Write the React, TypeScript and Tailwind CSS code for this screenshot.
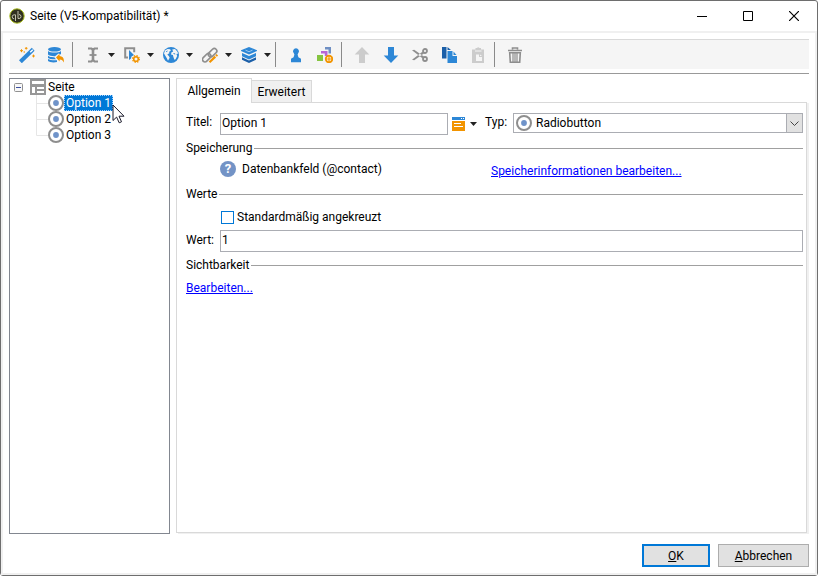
import React, { useState } from "react";

type IconProps = { children: React.ReactNode };

const Icon16: React.FC<IconProps> = ({ children }) => (
  <svg width="16" height="16" viewBox="0 0 16 16" fill="none" className="block shrink-0" aria-hidden="true">
    {children}
  </svg>
);

const BLUE = "#2d87d6";
const DARK_BLUE = "#1b5fa8";
const ORANGE = "#f29400";
const GRAY = "#8e8e8e";
const LIGHT = "#cccccc";

const WandIcon = () => (
  <Icon16>
    <path d="M1.400 14.800 14.200 2.300" stroke={BLUE} strokeWidth="4" />
    <path d="M11.200 5.200 13.800 2.700" stroke="#fff" strokeWidth="1.400" />
    <path d="M2.500 2.200v3M1 3.700h3M7.200 0v2.600M5.900 1.300h2.600M14.500 7.600v2.800M13.100 9h2.800M5.200 4.200v1.600" stroke={ORANGE} strokeWidth="1" />
  </Icon16>
);

const DatabaseIcon = () => (
  <Icon16>
    <ellipse cx="6.500" cy="2.300" rx="6.500" ry="2.300" fill={BLUE} />
    <path d="M0 4c2 2 11 2 13 0v3.400L10.500 6.600 7 9.300C4 9.400 1 8.800 0 7.600Z" fill={BLUE} />
    <path d="M0 8.800c1.500 1.300 4.200 1.500 6.300 1.400L8 12.200c-3 .3-6.500-.1-8-1.300Z" fill={BLUE} />
    <path d="M0 12c2 1.300 6 1.500 9 1.200v1.800c-3 .8-7.500.4-9-1Z" fill={BLUE} />
    <path d="M8 10.400 11.600 6.800v2.200c3 .2 4.800 2.200 4.200 6.600-.8-2-2-3-4.200-3v2Z" fill={ORANGE} />
  </Icon16>
);

const TextCursorIcon = () => (
  <Icon16>
    <path d="M3 1.500h3.500L8 3l1.500-1.500H13M3 14.500h3.500L8 13l1.500 1.500H13" stroke={GRAY} strokeWidth="2.200" />
    <path d="M8 2.500v11" stroke={GRAY} strokeWidth="2.600" />
    <path d="M4.500 8h7" stroke={GRAY} strokeWidth="1.800" />
  </Icon16>
);

const ActionIcon = () => (
  <Icon16>
    <path d="M4 10.500H1.200V1.200h9v4" stroke={GRAY} strokeWidth="2" />
    <path d="M5 3 10 8l-2.500 1.500L7 11.500l-2 1.500Z" fill={BLUE} />
    <circle cx="12" cy="12" r="2.300" stroke={ORANGE} strokeWidth="1.600" />
    <circle cx="12" cy="12" r="3.400" stroke={ORANGE} strokeWidth="1.200" strokeDasharray="1.400 1.270" />
  </Icon16>
);

const GlobeIcon = () => (
  <Icon16>
    <circle cx="8" cy="8" r="8" fill={BLUE} />
    <path d="M2 3.600 4.500 2l2.700.2.600 1.500-2 1.300.8 1-2.300 1.400L5.800 9l.9 1.800-1.700 3L3.700 11 2.500 9 1 6.500ZM9.200 2.400 12 1.900l2.300 2.500.9 2.100-1.800.5.8 2-1.600 3.300-1.200.5-1-2.800-.5-2L8 7.500l.5-2.200 1.700-.7Z" fill="#f5f5f5" />
    <path d="m3.200 4.700 1.300-.7M10.500 6.500l1.700.5" stroke={BLUE} />
  </Icon16>
);

const LinkIcon = () => (
  <Icon16>
    <g stroke={GRAY} strokeWidth="1.700">
      <rect x="5.700" y="3.200" width="9.800" height="5" rx="2.500" transform="rotate(-45 10.600 5.700)" />
      <rect x="-.2" y="8.200" width="9.800" height="5" rx="2.500" transform="rotate(-45 4.700 10.700)" />
    </g>
    <path d="m7.500 15.200 5.800-5.600" stroke={ORANGE} strokeWidth="2.200" />
    <path d="m14 9 1.300-1.200" stroke={ORANGE} strokeWidth="2.200" />
  </Icon16>
);

const LayersIcon = () => (
  <Icon16>
    <path d="m8 0 8 3.200V4L8 7.400 0 4v-.8Z" fill={BLUE} />
    <path d="m4.500 3.200 3.500 1.500 3.500-1.500" stroke="#a5cdf0" strokeWidth=".9" />
    <path d="m1 6 7 3 7-3v3.300L8 12.600 1 9.300Z" fill={BLUE} />
    <path d="m1 10.300 7 3.300 7-3.300v2.400L8 16l-7-3.300Z" fill={DARK_BLUE} />
  </Icon16>
);

const PersonIcon = () => (
  <Icon16>
    <path d="M8 1.200a3 3 0 0 1 2.300 4.900L9.600 7.500l.8 2.800 2.600 1.500v3.400H3v-3.400l2.600-1.500.8-2.800-.7-1.400A3 3 0 0 1 8 1.200Z" fill={BLUE} />
  </Icon16>
);

const ShapesIcon = () => (
  <Icon16>
    <path d="M8 0h6v6.500h-2.500V2.500H8Z" fill="#6f8fc3" />
    <path d="M4 4h6.500v5H7.800V6.500H4Z" fill="#b765d6" />
    <path d="M0 8h6v6H0Z" fill="#85c440" />
    <circle cx="12" cy="12" r="3.200" stroke={ORANGE} strokeWidth="1.900" fill="#fff" />
    <path d="M12 10v4M10 12h4" stroke={ORANGE} strokeWidth="1.200" />
  </Icon16>
);

const ArrowUpIcon = () => (
  <Icon16>
    <path d="m8 0 7.300 7.500H11V16H5V7.500H.7Z" fill={LIGHT} />
  </Icon16>
);

const ArrowDownIcon = () => (
  <Icon16>
    <path d="m8 16 7.300-7.500H11V0H5v8.500H.7Z" fill={BLUE} />
  </Icon16>
);

const ScissorsIcon = () => (
  <Icon16>
    <circle cx="13" cy="4" r="2" stroke={GRAY} strokeWidth="1.800" />
    <circle cx="13" cy="12" r="2" stroke={GRAY} strokeWidth="1.800" />
    <path d="m0 3.200 2.200-.4 9.700 6.700-1.500 1.800ZM0 12.800l2.200.4 9.700-6.700-1.500-1.800Z" fill={GRAY} />
  </Icon16>
);

const CopyIcon = () => (
  <Icon16>
    <path d="M1 0h4.500v11.500H1ZM6.500 0 10 3H6.500Z" fill={DARK_BLUE} />
    <path d="M6.500 4h5v5H16v7H6.500Z" fill={BLUE} />
    <path d="m12.500 4.500 3 3.500h-3Z" fill={BLUE} />
  </Icon16>
);

const PasteIcon = () => (
  <Icon16>
    <path d="M2 2.500h3.500V1h1.500a1.500 1.500 0 0 1 2.500 0H11v1.500h3V16H2Z" fill={LIGHT} />
    <path d="M5 4h6.500" stroke="#f5f5f5" />
    <path d="M6 7.500h3v2.500h3V14H6Z" fill="#f5f5f5" />
    <path d="m10 7.500 2 1.500h-2Z" fill="#f5f5f5" />
  </Icon16>
);

const TrashIcon = () => (
  <Icon16>
    <path d="M5.500 2.500V1h5v1.500M1 3.500h14" stroke={GRAY} strokeWidth="1.600" />
    <path d="M2.700 5.800h10.600l-.6 9.400H3.300Z" stroke={GRAY} strokeWidth="1.600" />
    <path d="M6 6v9M8 6v9M10 6v9" stroke={GRAY} strokeWidth="1.200" />
  </Icon16>
);

const RadioIcon = () => (
  <Icon16>
    <circle cx="8" cy="8" r="7" fill="#fff" stroke={GRAY} strokeWidth="2" />
    <circle cx="8" cy="8" r="2.900" fill="#6f93c9" />
  </Icon16>
);

const PageIcon = () => (
  <Icon16>
    <path d="M0 0h16v16H0Z" fill="#979797" />
    <path d="M2 2h12v3H2ZM2 8h3v6H2ZM7 8h7v2H7ZM7 12h7v2H7Z" fill="#fff" />
  </Icon16>
);

const Caret = () => (
  <svg width="7" height="4" viewBox="0 0 7 4" className="block shrink-0" aria-hidden="true">
    <path d="M0 0h7L3.500 4Z" fill="#222" />
  </svg>
);

interface ToolItem {
  label: string;
  icon: React.FC;
  menu?: boolean;
  disabled?: boolean;
}

const toolGroups: ToolItem[][] = [
  [
    { label: "Assistent", icon: WandIcon },
    { label: "Datenbank", icon: DatabaseIcon },
  ],
  [
    { label: "Eingabe", icon: TextCursorIcon, menu: true },
    { label: "Aktion", icon: ActionIcon, menu: true },
    { label: "Web", icon: GlobeIcon, menu: true },
    { label: "Link", icon: LinkIcon, menu: true },
    { label: "Container", icon: LayersIcon, menu: true },
  ],
  [
    { label: "Person", icon: PersonIcon },
    { label: "Elemente", icon: ShapesIcon },
  ],
  [
    { label: "Nach oben", icon: ArrowUpIcon, disabled: true },
    { label: "Nach unten", icon: ArrowDownIcon },
    { label: "Ausschneiden", icon: ScissorsIcon },
    { label: "Kopieren", icon: CopyIcon },
    { label: "Einfügen", icon: PasteIcon, disabled: true },
  ],
  [{ label: "Löschen", icon: TrashIcon }],
];

const options = ["Option 1", "Option 2", "Option 3"];

const TitleBar = () => (
  <header className="flex h-[30px] shrink-0 items-center pl-2">
    <svg width="16" height="16" viewBox="0 0 16 16" className="mr-[5px]" aria-hidden="true">
      <circle cx="8" cy="8" r="7.200" fill="#30301f" stroke="#a9bd1e" strokeWidth="1" />
      <path d="M6.500 13V6.800H5.200a2 2 0 0 0 0 4M9 3v7.500h1a2 2 0 0 0 0-4" fill="none" stroke="#c3c3ae" strokeWidth="1" />
    </svg>
    <h1 className="flex-1">Seite (V5-Kompatibilität) *</h1>
    <button type="button" aria-label="Minimieren" className="flex h-full w-[46px] items-center justify-center">
      <svg width="10" height="10" viewBox="0 0 10 10"><path d="M0 5.500h10" stroke="#000" /></svg>
    </button>
    <button type="button" aria-label="Maximieren" className="flex h-full w-[46px] items-center justify-center">
      <svg width="10" height="10" viewBox="0 0 10 10"><path d="M.5.5h9v9h-9Z" fill="none" stroke="#000" /></svg>
    </button>
    <button type="button" aria-label="Schließen" className="flex h-full w-[46px] items-center justify-center">
      <svg width="10" height="10" viewBox="0 0 10 10"><path d="m0 0 10 10M10 0 0 10" stroke="#000" strokeWidth="1.200" /></svg>
    </button>
  </header>
);

const Toolbar = () => (
  <div role="toolbar" className="ml-px flex h-[30px] shrink-0 items-center border-t border-[#d9d9d9] bg-[#f5f5f5] pl-0.5">
    {toolGroups.map((group, i) => (
      <React.Fragment key={i}>
        {i > 0 && <span className="mr-[5px] ml-0.5 h-[25px] w-px bg-[#8a8a8a]" />}
        {group.map(({ label, icon: Glyph, menu, disabled }) => (
          <button
            key={label}
            type="button"
            aria-label={label}
            disabled={disabled}
            className={menu ? "flex h-full w-[39px] items-center gap-[7px] pl-[7px]" : "flex h-full w-[29px] items-center pl-[7px]"}
          >
            <Glyph />
            {menu && <Caret />}
          </button>
        ))}
      </React.Fragment>
    ))}
  </div>
);

const Section: React.FC<{ title: string; className: string }> = ({ title, className }) => (
  <div className={`flex h-4 items-center gap-0.5 ${className}`}>
    <h2>{title}</h2>
    <span className="h-px flex-1 bg-[#a0a0a0]" />
  </div>
);

const Pointer = () => (
  <svg width="13" height="20" viewBox="0 0 13 20" className="pointer-events-none absolute top-[25px] left-[102px]" aria-hidden="true">
    <path d="M1 1v15.500l3.600-3.400 2.600 5.700 2.300-1-2.500-5.600H12Z" fill="#fff" stroke="#1a1a2a" strokeWidth="1" />
  </svg>
);

const App: React.FC = () => {
  const [selected, setSelected] = useState("Option 1");
  const [title, setTitle] = useState("Option 1");
  const [value, setValue] = useState("1");
  const [checked, setChecked] = useState(false);

  return (
    <div className="flex h-screen flex-col bg-white pr-2 pb-[9px] font-['Roboto','Open_Sans',sans-serif] text-[12px] leading-4 text-black">
      <div className="flex min-h-0 flex-1 flex-col rounded-[3px] border border-[#6e6e6e]">
        <TitleBar />
        <div className="flex min-h-0 flex-1 flex-col border-2 border-[#f0f0f0] p-1.5">
          <Toolbar />
          <hr className="mt-1 mb-1 border-[#999]" />

          <main className="flex min-h-0 flex-1 gap-1.5">
            <nav aria-label="Seitenstruktur" className="relative w-[161px] shrink-0 border border-[#828790] pl-1">
              <div className="flex h-4 items-center">
                <button type="button" aria-label="Seite einklappen" className="mr-[7px]">
                  <svg width="9" height="9" viewBox="0 0 9 9" className="block">
                    <rect x=".5" y=".5" width="8" height="8" rx="1" fill="#f8f8f8" stroke="#919191" />
                    <path d="M2 4.500h5" stroke="#3c4fa0" />
                  </svg>
                </button>
                <PageIcon />
                <span className="ml-0.5">Seite</span>
              </div>
              <ul>
                {options.map((name, i) => (
                  <li key={name} className="flex h-4 items-center pl-[22px]">
                    <svg width="12" height="16" viewBox="0 0 12 16" className="block shrink-0" aria-hidden="true">
                      <path d={i === options.length - 1 ? "M.5 0v8.500H12" : "M.5 0v16M.5 8.500H12"} fill="none" stroke="#e6e6e6" />
                    </svg>
                    <RadioIcon />
                    <button
                      type="button"
                      onClick={() => setSelected(name)}
                      className={
                        name === selected
                          ? "h-4 border border-dotted border-[#a8d4ff] bg-[#0078d7] px-px leading-[14px] text-white"
                          : "h-4 border border-transparent px-px leading-[14px]"
                      }
                    >
                      {name}
                    </button>
                  </li>
                ))}
              </ul>
              <Pointer />
            </nav>

            <section className="mr-0.5 mb-px flex min-w-0 flex-1 flex-col">
              <div role="tablist" className="flex h-6 shrink-0 items-end">
                <button type="button" role="tab" aria-selected="true" className="z-10 -mb-px h-[25px] w-[76px] self-start border border-b-0 border-[#d9d9d9] bg-white">
                  Allgemein
                </button>
                <button type="button" role="tab" aria-selected="false" className="-ml-px h-[22px] w-[61px] border border-b-0 border-[#d9d9d9] bg-[#f0f0f0]">
                  Erweitert
                </button>
              </div>

              <form
                onSubmit={e => e.preventDefault()}
                className="flex-1 border border-[#d9d9d9] pt-2.5 pr-[3px] pl-[9px] shadow-[2px_1px_0_#f0f0f0]"
              >
                <div className="flex items-start">
                  <label htmlFor="titel" className="mt-px w-[34px] shrink-0">Titel:</label>
                  <input
                    id="titel"
                    type="text"
                    value={title}
                    onChange={e => setTitle(e.target.value)}
                    className="h-[22px] w-[228px] border border-[#abadb3] px-px pb-0.5 outline-none"
                  />
                  <button type="button" aria-label="Personalisierung" className="ml-1 flex h-[22px] items-center gap-[5px]">
                    <svg width="13" height="14" viewBox="0 0 13 14" className="block" aria-hidden="true">
                      <path d="M0 0h13v3H0Z" fill={BLUE} />
                      <path d="M0 4h13v10H0Z" fill={ORANGE} />
                      <path d="M2 6.500h7M2 9.500h9" stroke="#fff" />
                      <path d="M9 1.500h1M11 1.500h1" stroke="#fff" />
                    </svg>
                    <Caret />
                  </button>
                  <label htmlFor="typ" className="mt-px ml-2 w-[28px] shrink-0">Typ:</label>
                  <div className="relative h-5 flex-1">
                    <select id="typ" className="h-5 w-full appearance-none border border-[#abadb3] bg-white pl-[22px] outline-none">
                      <option>Radiobutton</option>
                    </select>
                    <span className="pointer-events-none absolute top-0.5 left-[3px]">
                      <RadioIcon />
                    </span>
                    <span className="pointer-events-none absolute top-0 right-0 flex h-5 w-[17px] items-center justify-center border border-[#abadb3] bg-[#e1e1e1]">
                      <svg width="9" height="5" viewBox="0 0 9 5"><path d="m.5.5 4 4 4-4" fill="none" stroke="#444" /></svg>
                    </span>
                  </div>
                </div>

                <Section title="Speicherung" className="mt-[5px]" />
                <div className="mt-[5px] flex h-4 items-center">
                  <div className="flex w-[305px] shrink-0 items-center gap-1.5 pl-[34px]">
                    <span className="flex size-4 items-center justify-center rounded-full bg-[#7393c6] text-[13px] font-bold text-white">?</span>
                    <span>Datenbankfeld (@contact)</span>
                  </div>
                  <a href="#speicherung" className="mt-1 text-[#0000ff] underline">Speicherinformationen bearbeiten...</a>
                </div>

                <Section title="Werte" className="mt-[9px]" />
                <label className="mt-[7px] flex h-4 items-center gap-[3px] pl-[35px]">
                  <input
                    type="checkbox"
                    checked={checked}
                    onChange={e => setChecked(e.target.checked)}
                    className="size-[13px] appearance-none border border-solid border-[#0078d7] bg-white checked:bg-[#0078d7]"
                  />
                  Standardmäßig angekreuzt
                </label>
                <div className="mt-[5px] flex items-start">
                  <label htmlFor="wert" className="mt-0.5 w-[34px] shrink-0">Wert:</label>
                  <input
                    id="wert"
                    type="text"
                    value={value}
                    onChange={e => setValue(e.target.value)}
                    className="h-[22px] min-w-0 flex-1 border border-[#abadb3] px-px pb-0.5 outline-none"
                  />
                </div>

                <Section title="Sichtbarkeit" className="mt-[5px]" />
                <a href="#sichtbarkeit" className="mt-[7px] inline-block text-[#0000ff] underline">Bearbeiten...</a>
              </form>
            </section>
          </main>

          <footer className="mt-2.5 flex shrink-0 justify-end gap-2">
            <button type="button" className="h-[23px] w-[68px] border-2 border-[#0078d7] bg-[#e1e1e1]">
              <span className="underline">O</span>K
            </button>
            <button type="button" className="h-[23px] w-[91px] border border-[#adadad] bg-[#e1e1e1]">
              <span className="underline">A</span>bbrechen
            </button>
          </footer>
        </div>
      </div>
    </div>
  );
};

export default App;
